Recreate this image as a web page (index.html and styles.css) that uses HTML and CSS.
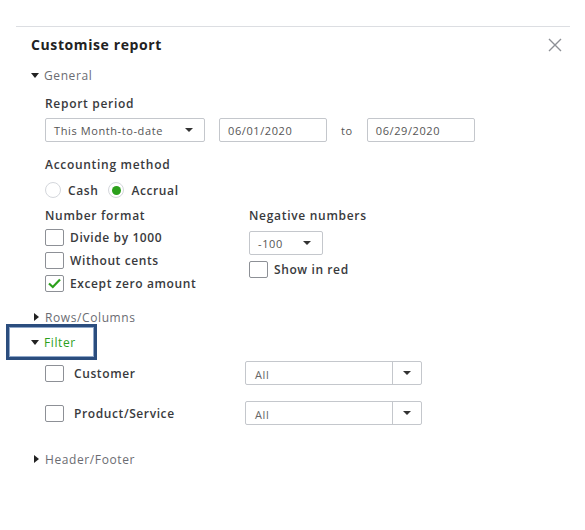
FILE: index.html
```html
<!DOCTYPE html>
<html lang="en">
<head>
  <meta charset="UTF-8" />
  <title>Customise report</title>
  <link rel="stylesheet" href="styles.css">
</head>
<body>

<div class="panel">
  <div class="panel-header">
    <div class="title">Customise report</div>
    <svg class="close" width="14" height="14" viewBox="0 0 14 14"><path d="M1 1 L13 13 M13 1 L1 13" stroke="#8d9096" stroke-width="1.4" fill="none"/></svg>
  </div>

  <div class="section-toggle"><span class="tri down"></span>General</div>
  <div class="section-body">
    <div class="label">Report period</div>
    <div class="row period">
      <div class="field select w160">This Month-to-date <span class="caret"></span></div>
      <div class="field date">06/01/2020</div>
      <span class="to">to</span>
      <div class="field date">06/29/2020</div>
    </div>

    <div class="label method">Accounting method</div>
    <div class="row radios">
      <label class="radio"><span class="dot"></span>Cash</label>
      <label class="radio"><span class="dot on"></span>Accrual</label>
    </div>

    <div class="cols">
      <div class="col">
        <div class="label tight">Number format</div>
        <label class="check"><span class="box"></span>Divide by 1000</label>
        <label class="check"><span class="box"></span>Without cents</label>
        <label class="check"><span class="box on"><svg width="13" height="11" viewBox="0 0 13 11"><path d="M1 5.5 L4.8 9 L12 1.5" stroke="#2ca01c" stroke-width="2.2" fill="none"/></svg></span>Except zero amount</label>
      </div>
      <div class="col">
        <div class="label tight">Negative numbers</div>
        <div class="field select neg">-100 <span class="caret"></span></div>
        <label class="check"><span class="box"></span>Show in red</label>
      </div>
    </div>
  </div>

  <div class="section-toggle rows"><span class="tri right"></span>Rows/Columns</div>

  <div class="focus-ring">
    <div class="section-toggle active"><span class="tri down"></span>Filter</div>
  </div>
  <div class="filter-list">
    <div class="filter-row">
      <label class="check filter"><span class="box"></span>Customer</label>
      <div class="combo"><span class="combo-text">All</span><span class="combo-btn"><span class="caret"></span></span></div>
    </div>
    <div class="filter-row">
      <label class="check filter"><span class="box"></span>Product/Service</label>
      <div class="combo"><span class="combo-text">All</span><span class="combo-btn"><span class="caret"></span></span></div>
    </div>
  </div>

  <div class="section-toggle footer"><span class="tri right"></span>Header/Footer</div>
</div>

</body>
</html>
```

FILE: styles.css
```css
* { box-sizing: border-box; }
body, html {
  margin: 0;
  padding: 0;
  background: #fff;
  font-family: "Open Sans", "Lato", sans-serif;
  color: #393a3d;
}
.panel {
  margin: 26px 15px 0 16px;
  border-top: 1px solid #dcdee2;
  padding: 0 0 0 15px;
}
.panel-header {
  display: flex;
  align-items: center;
  justify-content: space-between;
  padding: 0 8px 2px 0;
  height: 37px;
}
.title {
  font-size: 14px;
  font-weight: 700;
  color: #222;
  letter-spacing: 0.6px;
}
.close { margin-top: 0; }

.section-toggle {
  display: flex;
  align-items: center;
  font-size: 12px;
  color: #6b6c72;
  letter-spacing: 0.6px;
  height: 22px;
}
.tri {
  display: inline-block;
  width: 0; height: 0;
  margin-right: 5px;
}
.tri.down {
  border-left: 4.5px solid transparent;
  border-right: 4.5px solid transparent;
  border-top: 5px solid #222;
  margin-right: 5px;
}
.tri.right {
  border-top: 4px solid transparent;
  border-bottom: 4px solid transparent;
  border-left: 5px solid #222;
  margin-left: 3px;
  margin-right: 6px;
}
.section-body { padding: 0 0 0 14px; }
.label {
  font-size: 12px;
  font-weight: 600;
  color: #393a3d;
  letter-spacing: 0.7px;
  margin-top: 9px;
  height: 16px;
  display: flex;
  align-items: center;
}
.row { display: flex; align-items: center; }
.period { margin-top: 7px; margin-bottom: 6px; }
.field {
  height: 24px;
  border: 1px solid #c4c7cc;
  border-radius: 2px;
  font-size: 11px;
  color: #555;
  letter-spacing: 0.6px;
  display: flex;
  align-items: center;
  padding: 0 8px;
}
.select { justify-content: space-between; }
.w160 { width: 160px; }
.date { width: 108px; }
.w160 + .date { margin-left: 14px; }
.to { font-size: 11px; color: #555; margin: 0 14px 0 14px; letter-spacing: 0.6px; }
.caret {
  display: inline-block;
  width: 0; height: 0;
  border-left: 4px solid transparent;
  border-right: 4px solid transparent;
  border-top: 4px solid #333;
  margin-right: 3px;
}
.label.method { margin-top: 14px; }
.radios { margin-top: 10px; height: 16px; gap: 0; }
.radio {
  display: flex;
  align-items: center;
  font-size: 12px;
  font-weight: 600;
  letter-spacing: 0.6px;
  margin-right: 10px;
}
.dot {
  width: 16px; height: 16px;
  border: 1px solid #d4d7dc;
  border-radius: 50%;
  margin: 0 7px 0 0;
  display: flex; align-items: center; justify-content: center;
}
.dot.on::after {
  content: "";
  width: 9px; height: 9px;
  border-radius: 50%;
  background: #2ca01c;
}
.cols { display: flex; margin-top: 1px; }
.col { display: flex; flex-direction: column; }
.col:first-child { width: 204px; }
.label.tight { margin-bottom: 3px; margin-top: 8px; }
.check {
  display: flex;
  align-items: center;
  font-size: 12px;
  font-weight: 600;
  letter-spacing: 0.6px;
  height: 23px;
}
.box {
  width: 19px; height: 17px;
  border: 1px solid #8d9096;
  border-radius: 2px;
  margin-right: 6px;
  display: flex; align-items: center; justify-content: center;
  background: #fff;
}
.neg { width: 74px; margin-top: 5px; margin-bottom: 3px; }

.rows { margin-top: 11px; }
.focus-ring {
  margin: -4px 0 0 -25px;
  width: 91px;
  height: 36px;
  border: 3px solid #2b4d7e;
  box-shadow: inset 0 0 0 1px #8fa7c9;
  padding-left: 22px;
  display: flex;
  align-items: center;
}
.active { color: #2ca01c; font-size: 12px; }
.filter-list { padding-left: 14px; }
.filter-row {
  display: flex;
  align-items: center;
  height: 24px;
  margin-top: 1px;
  margin-bottom: 16px;
}
.check.filter { width: 200px; }
.check.filter .box { margin-right: 10px; }
.combo {
  width: 177px;
  height: 24px;
  border: 1px solid #c4c7cc;
  border-radius: 2px;
  display: flex;
}
.combo-text {
  flex: 1;
  font-size: 11px;
  color: #666;
  padding: 5px 9px;
  letter-spacing: 0.6px;
}
.combo-btn {
  width: 29px;
  border-left: 1px solid #c4c7cc;
  display: flex; align-items: center; justify-content: center;
}
.combo-btn .caret { margin: 0; }
.footer { margin-top: 23px; }
```
